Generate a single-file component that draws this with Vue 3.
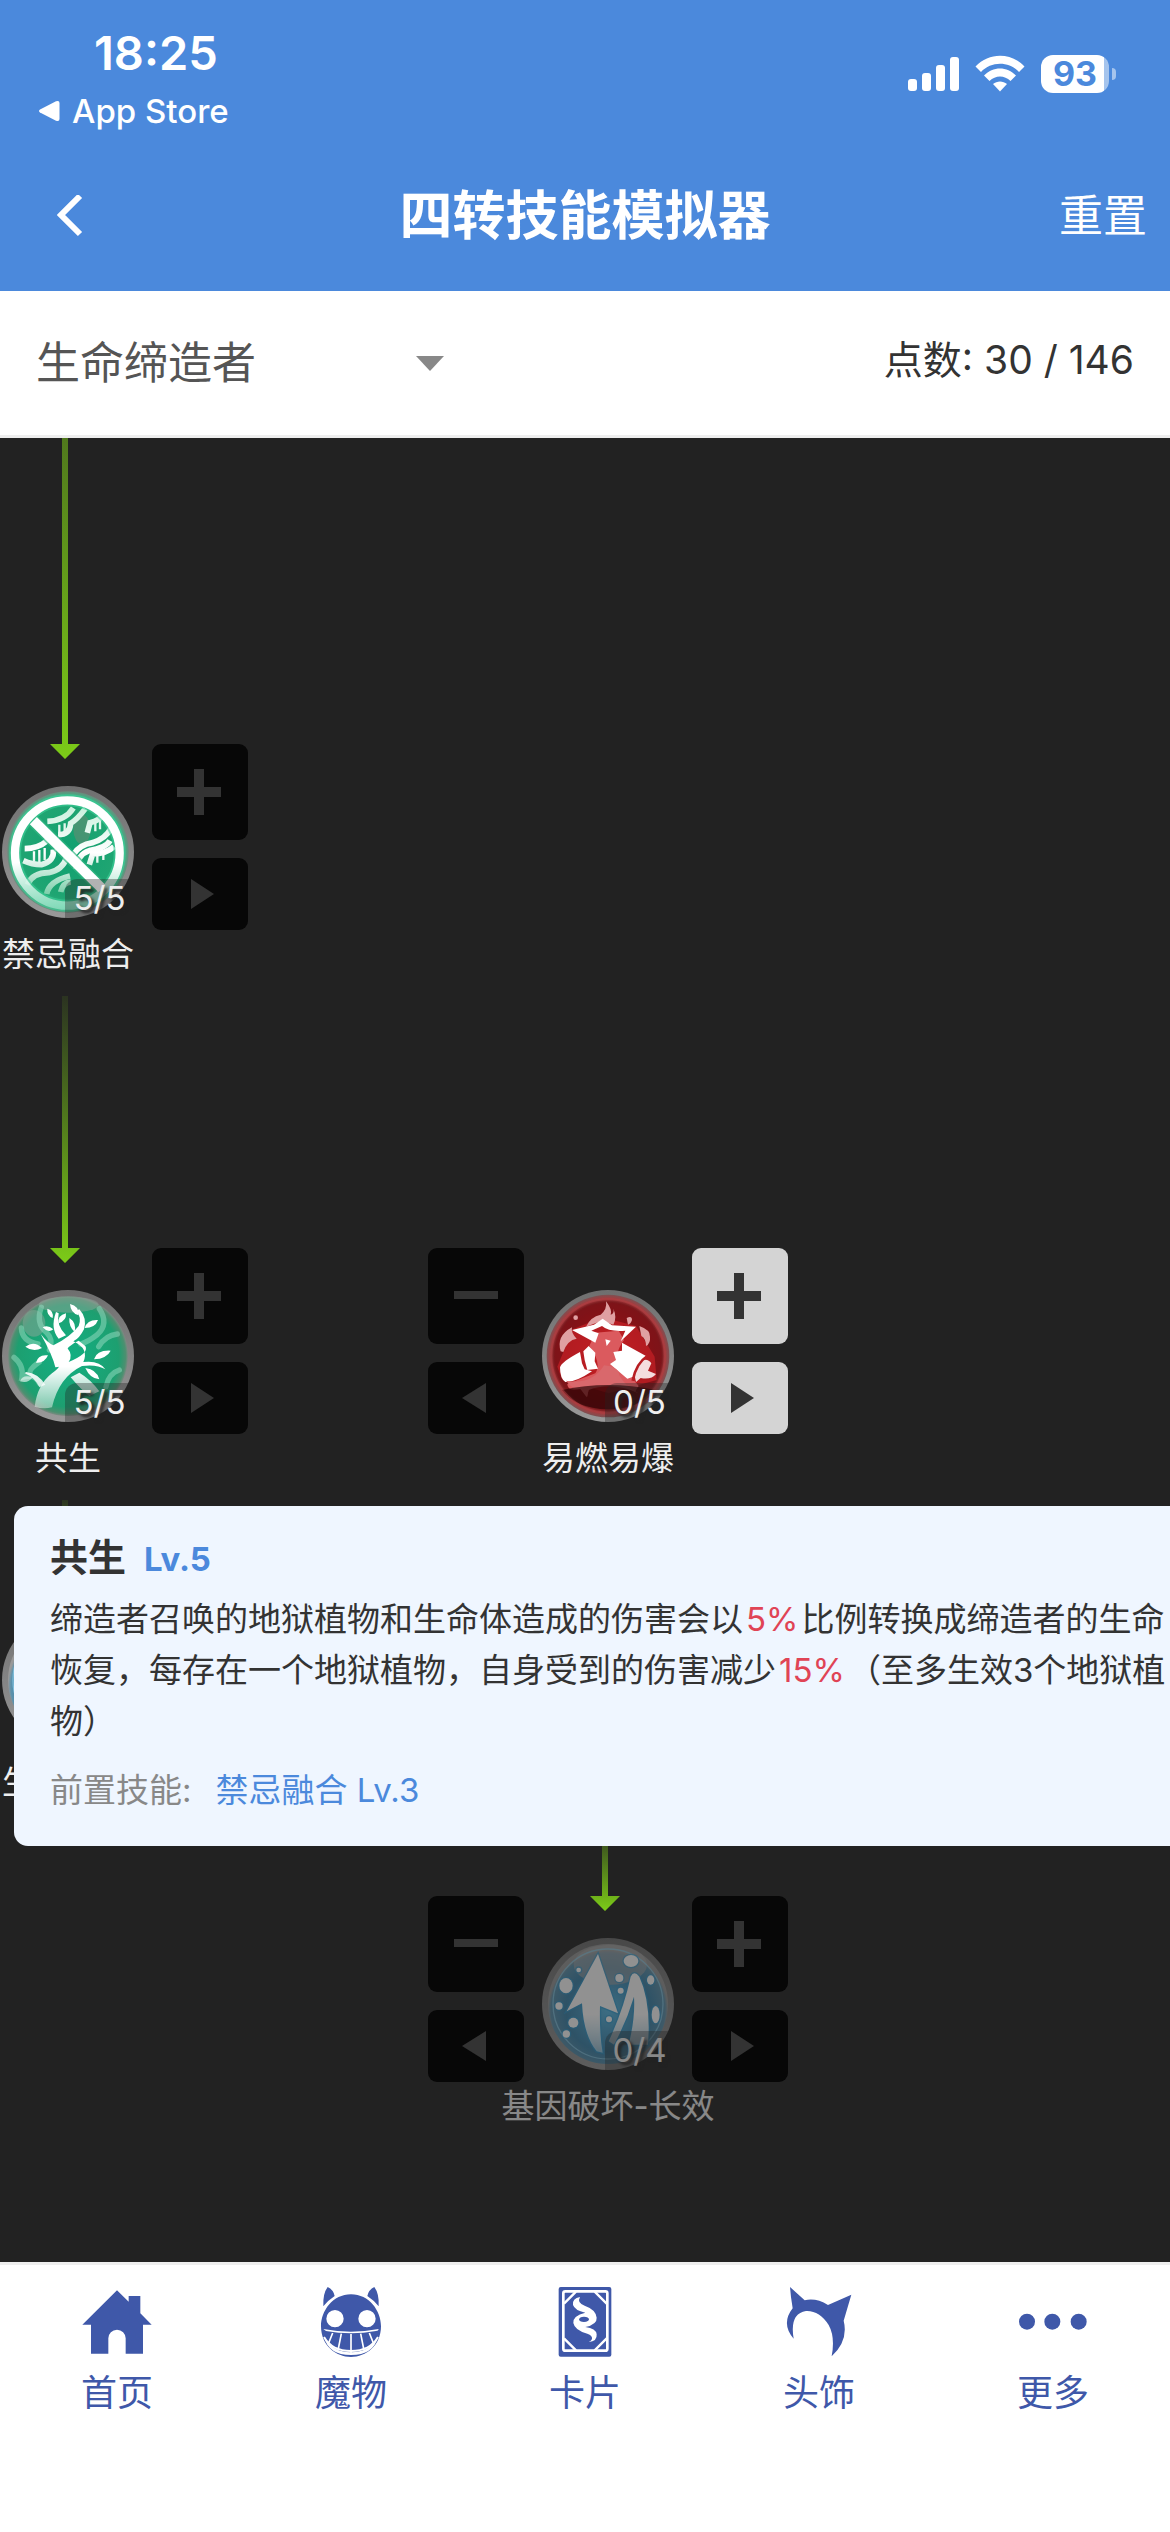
<template>
  <div class="app">
    <header class="header">
      <!-- Device status -->
      <div class="status">
        <div class="status__left">
          <span class="status__time">18:25</span>
          <a class="status__return" href="#">
            <svg width="22" height="22" viewBox="0 0 22 22" fill="#fff">
              <path d="M2 9.5L18 1.3Q21.5 0 21.5 3V19Q21.5 22 18 20.7L2 12.5Q0 11 2 9.5Z"/>
            </svg>
            App Store
          </a>
        </div>
        <div class="status__right">
          <svg width="51" height="38" viewBox="0 0 51 38" fill="#fff">
            <rect x="0" y="24" width="9" height="12" rx="3"/>
            <rect x="14" y="18" width="9" height="18" rx="3"/>
            <rect x="28" y="10" width="9" height="26" rx="3"/>
            <rect x="42" y="2" width="9" height="34" rx="3"/>
          </svg>
          <svg width="50" height="38" viewBox="0 0 50 38" fill="#fff">
            <path d="M0.5 11.5C14-3 36-3 49.500 11.500L44 17C34 6 16 6 6 17Z"/>
            <path d="M9 20.500C18 11 32 11 41 20.500L35.500 26C29.500 20 20.500 20 14.500 26Z"/>
            <path d="M18 29C22 25.500 28 25.500 32 29L25 36.500Z"/>
          </svg>
          <div class="battery">
            <span class="battery__body">93</span>
            <span class="battery__nub"></span>
          </div>
        </div>
      </div>

      <!-- Title bar -->
      <div class="titlebar">
        <button class="titlebar__back" aria-label="返回">
          <svg width="26" height="42" viewBox="0 0 26 42" fill="none" stroke="#fff" stroke-width="6">
            <path d="M23 1L4 20L23 39"/>
          </svg>
        </button>
        <h1 class="titlebar__title">四转技能模拟器</h1>
        <button class="titlebar__reset" @click="reset">重置</button>
      </div>
    </header>

    <div class="toolbar">
      <div class="job">
        <select v-model="job" class="job__select" aria-label="职业">
          <option v-for="name in jobs" :key="name" :value="name">{{ name }}</option>
        </select>
        <svg class="job__caret" width="28" height="15" viewBox="0 0 28 15" fill="#888">
          <path d="M0 0H28L14 15Z"/>
        </svg>
      </div>
      <span class="toolbar__points">点数: {{ used }} / 146</span>
    </div>

    <!-- Skill tree -->
    <main class="tree">
      <div
        v-for="(arrow, i) in arrows"
        :key="'a' + i"
        class="arrow"
        :style="{ left: arrow.x + 'px', top: arrow.y + 'px', height: arrow.length + 'px' }"
      ></div>

      <div
        v-for="skill in skills"
        :key="skill.id"
        class="skill"
        :class="{ 'skill--locked': skill.locked }"
        :style="{ left: skill.x + 'px', top: skill.y + 'px' }"
      >
        <div class="skill__controls">
          <button class="btn" :disabled="!canSub(skill)" aria-label="减一级" @click="skill.level--">
            <svg width="44" height="46" viewBox="0 0 44 46"><path d="M0 18H44V26H0Z"/></svg>
          </button>
          <button class="btn btn--small" :disabled="!canSub(skill)" aria-label="最低" @click="skill.level = 0">
            <svg width="28" height="30" viewBox="0 0 28 30"><path d="M24 0V30L0 15Z"/></svg>
          </button>
        </div>

        <div class="skill__main">
          <div class="skill__icon">
            <svg viewBox="0 0 396 396" width="132" height="132">
              <defs>
                <linearGradient id="rim" x1="0" y1="0" x2="0" y2="1">
                  <stop offset="0" stop-color="#6f6f6f"/><stop offset="1" stop-color="#999"/>
                </linearGradient>
                <radialGradient id="green" cx="0.5" cy="0.5" r="0.5">
                  <stop offset="0" stop-color="#0fa070"/><stop offset="0.75" stop-color="#1fa572"/>
                  <stop offset="0.92" stop-color="#35b886"/><stop offset="1" stop-color="#6a8c7c"/>
                </radialGradient>
                <radialGradient id="leaf" cx="0.5" cy="0.5" r="0.5">
                  <stop offset="0" stop-color="#12b083"/><stop offset="0.85" stop-color="#1d9f70"/>
                  <stop offset="0.96" stop-color="#4c9070"/><stop offset="1" stop-color="#7c8a82"/>
                </radialGradient>
                <radialGradient id="red" cx="0.5" cy="0.5" r="0.5">
                  <stop offset="0" stop-color="#c22"/><stop offset="0.7" stop-color="#8a1419"/>
                  <stop offset="0.88" stop-color="#7c191d"/><stop offset="0.94" stop-color="#a33d40"/>
                  <stop offset="1" stop-color="#7d5052"/>
                </radialGradient>
                <radialGradient id="blue" cx="0.5" cy="0.55" r="0.5">
                  <stop offset="0" stop-color="#58b8e4"/><stop offset="0.7" stop-color="#3a83aa"/>
                  <stop offset="0.95" stop-color="#5b91ac"/><stop offset="1" stop-color="#999"/>
                </radialGradient>
                <linearGradient id="fade" gradientUnits="userSpaceOnUse" x1="0" y1="230" x2="0" y2="370">
                  <stop offset="0" stop-color="#fff"/><stop offset="1" stop-color="#fff" stop-opacity="0.35"/>
                </linearGradient>
                <linearGradient id="strand" gradientUnits="userSpaceOnUse" x1="0" y1="60" x2="0" y2="340">
                  <stop offset="0" stop-color="#c9f0dd"/><stop offset="0.5" stop-color="#fff"/>
                  <stop offset="1" stop-color="#6cc9a0"/>
                </linearGradient>
              </defs>
              <circle cx="198" cy="198" r="198" fill="url(#rim)"/>

              <template v-if="skill.icon === 'fusion'">
                <circle cx="198" cy="198" r="182" fill="url(#green)"/>
                <ellipse cx="240" cy="130" rx="26" ry="44" fill="#5a8f74" opacity="0.7"/>
                <!-- Twisted strands behind the ban sign -->
                <g fill="none" stroke="url(#strand)" stroke-width="17">
                  <path d="M136 106Q190 104 214 66M250 68Q226 100 206 112Q204 146 168 146M68 188Q108 188 136 164M154 190Q158 226 118 236Q90 236 64 224"/>
                  <path d="M76 296Q92 260 140 260Q182 252 194 214M134 324Q142 284 204 270M214 206Q232 176 272 170Q312 156 326 128M324 164Q312 186 262 194Q226 206 222 250"/>
                  <path d="M256 140L264 110Q292 104 308 82M262 236L272 204Q312 204 336 182M176 318Q182 290 206 288"/>
                </g>
                <g fill="none" stroke="url(#strand)" stroke-width="7">
                  <path d="M172 116V142M188 112V138M96 196V226M112 192V230M128 186V222M280 106V136M294 100V130M286 204V230M304 200V222"/>
                </g>
                <ellipse cx="196" cy="201" rx="157" ry="158" fill="none" stroke="#3ccf98" stroke-width="36" opacity="0.6"/>
                <path d="M94 104L300 308" stroke="#33b884" stroke-width="40" opacity="0.7"/>
                <path d="M94 104L300 308" stroke="#fff" stroke-width="30"/>
                <ellipse cx="196" cy="201" rx="157" ry="158" fill="none" stroke="url(#fade)" stroke-width="25"/>
              </template>

              <template v-else-if="skill.icon === 'tree'">
                <circle cx="198" cy="198" r="180" fill="url(#leaf)"/>
                <ellipse cx="96" cy="100" rx="34" ry="40" fill="#8ea69a" opacity="0.5"/>
                <ellipse cx="200" cy="44" rx="90" ry="24" fill="#8ea69a" opacity="0.5"/>
                <g fill="none" stroke="#8fd9bd" stroke-opacity="0.55" stroke-width="16" stroke-linecap="round">
                  <path d="M118 52Q100 100 134 128Q156 150 142 180M58 114Q60 154 108 162M292 56Q322 100 286 134Q258 156 236 162M346 132Q310 136 290 170M36 202Q66 226 60 262Q100 250 112 280M352 240Q320 250 312 290M112 216Q80 238 84 252"/>
                </g>
                <path fill="url(#fade)" d="M98 350Q106 284 150 250Q190 220 180 194L196 174Q214 196 200 216Q262 190 250 168L230 152Q196 166 186 194Q194 230 160 232Q152 196 116 132Q136 158 154 166Q204 142 230 108Q240 80 222 62L232 58Q256 84 246 118Q232 146 214 154Q262 176 244 216Q292 210 310 238Q284 222 240 228Q170 262 150 352Q124 358 98 350Z"/>
                <path fill="url(#fade)" d="M170 146Q144 116 162 66L170 70Q162 106 192 136ZM72 246Q108 250 130 284L112 292Q98 262 68 250ZM206 262L232 248Q266 268 292 304L262 318Q238 300 206 262Z"/>
                <g fill="#fff">
                  <path d="M204 42Q232 48 230 76Q206 70 204 42ZM136 56Q156 62 152 84Q134 76 136 56ZM170 100Q166 76 192 70Q194 92 170 100ZM202 84Q224 98 218 126Q200 110 202 84ZM248 114Q256 88 288 90Q280 114 248 114ZM122 112Q138 104 154 118Q138 130 122 112ZM70 170Q96 150 120 174Q94 188 70 170ZM102 218Q108 192 138 196Q128 220 102 218ZM276 208Q284 180 326 182Q314 206 276 208ZM250 234Q284 238 292 268Q264 266 250 234Z"/>
                  <path d="M54 274Q62 252 92 262Q78 282 54 274Z" opacity="0.6"/>
                </g>
              </template>

              <template v-else-if="skill.icon === 'blast'">
                <circle cx="198" cy="198" r="184" fill="url(#red)"/>
                <circle cx="198" cy="198" r="160" fill="#7d1016" opacity="0.55"/>
                <path d="M92 118L180 82L282 108L338 200L344 270L200 310L60 268L46 230Z" fill="#e2262b" opacity="0.5"/>
                <g fill="#e0a0a2">
                  <path d="M132 110Q146 80 176 74Q196 58 192 34Q212 60 206 74Q218 70 214 56Q226 82 214 104L180 92Z"/>
                  <path d="M56 184Q42 138 90 112Q86 128 104 146Q76 150 64 186Z"/>
                  <path d="M292 108Q326 120 324 140Q326 160 312 168Q312 146 298 138Z"/>
                  <circle cx="101" cy="83" r="7"/><path d="M254 84Q270 76 270 90Q266 102 258 104Z"/>
                </g>
                <path d="M160 128L230 122L246 150Q228 172 222 208Q260 250 290 288L280 304Q200 270 140 298L136 320L116 296Q76 306 76 282L160 250Q180 220 142 168Z" fill="#db5a5e"/>
                <g fill="#fff">
                  <path d="M90 120L156 104L182 86L210 106L282 110L236 154L250 122Q200 126 180 108L148 122L170 130L160 158Z"/>
                  <path d="M54 232Q58 216 114 186L120 220L128 238L150 244Q100 278 70 276Q54 266 54 232Z"/>
                  <path d="M124 184L140 168L160 188L158 214L168 236L136 240L128 210Z"/>
                  <path d="M240 158L312 198Q286 222 274 260L256 266L204 222L222 210L214 186L240 182Z"/>
                  <path d="M190 148L206 152L194 168Z"/>
                  <path d="M290 216Q316 200 328 220L318 242L342 252Q328 270 296 264L282 276Q272 250 290 216Z" opacity="0.85"/>
                </g>
                <path d="M316 198Q282 220 272 272" stroke="#b71d22" stroke-width="8" fill="none"/>
                <path d="M72 272Q150 286 186 226Q230 230 232 256Q250 290 290 310Q210 274 140 300L134 322L116 298Q90 298 72 272Z" fill="#d9686c"/>
                <path d="M60 300Q198 270 340 300Q300 356 198 358Q100 356 60 300Z" fill="#2c0406" opacity="0.7"/>
                <circle cx="198" cy="198" r="170" fill="none" stroke="#b84145" stroke-width="6" opacity="0.5"/>
              </template>

              <template v-else>
                <circle cx="198" cy="198" r="180" fill="url(#blue)"/>
                <ellipse cx="205" cy="80" rx="110" ry="60" fill="#aaa" opacity="0.6"/>
                <circle cx="198" cy="198" r="165" fill="none" stroke="#8fd0ee" stroke-width="4" opacity="0.7"/>
                <g stroke="#2d9bd2" stroke-width="8" stroke-opacity="0.6" paint-order="stroke">
                  <path fill="url(#fade)" d="M168 48L228 226L174 204Q172 290 182 344L164 340Q124 290 120 196L74 220Z"/>
                  <path fill="url(#fade)" d="M200 310Q246 210 266 116Q276 96 292 116Q322 180 320 280L318 320H260Q280 240 276 176Q254 250 216 320Z"/>
                  <g fill="#fff">
                    <ellipse cx="267" cy="69" rx="22" ry="18"/><ellipse cx="72" cy="143" rx="20" ry="23"/>
                    <circle cx="232" cy="120" r="12"/><circle cx="236" cy="158" r="9"/>
                    <ellipse cx="326" cy="126" rx="11" ry="14"/><ellipse cx="341" cy="230" rx="12" ry="26"/>
                    <circle cx="51" cy="204" r="11"/><circle cx="94" cy="254" r="15"/>
                    <circle cx="73" cy="288" r="11"/><circle cx="201" cy="244" r="9"/><circle cx="110" cy="96" r="7"/>
                  </g>
                </g>
              </template>
            </svg>
            <span class="skill__level">{{ skill.level }}/{{ skill.max }}</span>
          </div>
          <span class="skill__name">{{ skill.name }}</span>
        </div>

        <div class="skill__controls">
          <button class="btn" :disabled="!canAdd(skill)" aria-label="加一级" @click="skill.level++">
            <svg width="46" height="46" viewBox="0 0 46 46"><path d="M17 0H27V18H44V28H27V46H17V28H0V18H17Z"/></svg>
          </button>
          <button class="btn btn--small" :disabled="!canAdd(skill)" aria-label="最高" @click="skill.level = skill.max">
            <svg width="28" height="30" viewBox="0 0 28 30"><path d="M5 0L28 15L5 30Z"/></svg>
          </button>
        </div>
      </div>

      <!-- Skill details -->
      <section class="tip">
        <h2 class="tip__head">共生<span class="tip__lv">Lv.5</span></h2>
        <p class="tip__text">缔造者召唤的地狱植物和生命体造成的伤害会以<em>5%</em>比例转换成缔造者的生命恢复，每存在一个地狱植物，自身受到的伤害减少<em>15%</em>（至多生效3个地狱植物）</p>
        <p class="tip__need">前置技能:<a href="#">禁忌融合 Lv.3</a></p>
      </section>
    </main>

    <nav class="nav">
      <a class="nav__item" href="#">
        <svg width="70" height="70" viewBox="0 0 210 210" fill="currentColor">
          <path d="M105 10L140 44V27H175V79L209 113H183V200H131V154A26 26 0 0 0 79 154V200H27V113H1Z"/>
        </svg>
        首页
      </a>
      <a class="nav__item" href="#">
        <svg width="70" height="70" viewBox="0 0 210 210" fill="currentColor">
          <path d="M35 0Q52 8 56 27Q36 40 22 58Q20 20 35 0ZM175 0Q158 8 154 27Q174 40 188 58Q190 20 175 0Z"/>
          <path fill-rule="evenodd" d="M105 22C160 22 195 72 195 118C195 176 150 210 105 210C60 210 15 176 15 118C15 72 50 22 105 22ZM57 69A26 26 0 1 0 57 121A26 26 0 1 0 57 69ZM153 69A26 26 0 1 0 153 121A26 26 0 1 0 153 69Z"/>
          <path fill="#fff" d="M22 126Q105 142 188 126Q188 132 180 132Q105 146 30 132ZM24 150Q50 196 105 196Q160 196 186 150Q172 204 105 204Q38 204 24 150Z"/>
          <g fill="none" stroke="#fff">
            <path stroke-width="5" d="M50 138L38 168M76 140L66 190M105 141V200M134 140L144 190M160 138L172 168"/>
            <path stroke-width="6" d="M24 150Q48 192 105 192Q162 192 186 150"/>
          </g>
        </svg>
        魔物
      </a>
      <a class="nav__item" href="#">
        <svg width="70" height="70" viewBox="0 0 210 210" fill="currentColor">
          <rect x="26" y="0" width="158" height="209" rx="6"/>
          <rect x="40" y="13" width="132" height="178" rx="6" fill="none" stroke="#fff" stroke-width="8"/>
          <path fill="none" stroke="#fff" stroke-width="7" d="M42 50L78 14M134 14L170 50M42 154L78 190M170 154L134 190"/>
          <path fill="#fff" fill-rule="evenodd" d="M90 30Q66 34 69 54Q74 70 106 77Q68 86 70 108Q74 130 112 140Q128 146 126 156Q124 162 116 165Q142 164 140 142Q138 124 106 120Q142 112 140 92Q138 68 104 56Q80 48 90 30ZM102 89Q88 90 87 97Q88 105 102 105Q117 104 117 97Q116 89 102 89Z"/>
        </svg>
        卡片
      </a>
      <a class="nav__item" href="#">
        <svg width="70" height="70" viewBox="0 0 210 210" fill="currentColor">
          <path d="M18 0L62 40Q96 32 132 54L202 23L179 101Q194 160 143 208Q154 150 134 114Q106 70 66 72Q16 80 29 155Q-10 110 26 64Q20 28 18 0Z"/>
        </svg>
        头饰
      </a>
      <a class="nav__item" href="#">
        <svg width="70" height="70" viewBox="0 0 210 210" fill="currentColor">
          <circle cx="27" cy="104" r="24"/><circle cx="103" cy="104" r="24"/><circle cx="182" cy="104" r="24"/>
        </svg>
        更多
      </a>
    </nav>
  </div>
</template>

<script setup>
import { ref } from 'vue'

const jobs = ['生命缔造者']
const job = ref('生命缔造者')
const used = ref(30)

// x/y are the top-left corner of a node on the tree canvas
const skills = ref([
  { id: 1, name: '禁忌融合', icon: 'fusion', level: 5, max: 5, x: -112, y: 306 },
  { id: 2, name: '共生', icon: 'tree', level: 5, max: 5, x: -112, y: 810 },
  { id: 3, name: '易燃易爆', icon: 'blast', level: 0, max: 5, x: 428, y: 810 },
  { id: 4, name: '生命强化', icon: 'gene', level: 0, max: 5, x: -112, y: 1134 },
  { id: 5, name: '基因破坏-长效', icon: 'gene', level: 0, max: 4, x: 428, y: 1458, locked: true }
])

const arrows = [
  { x: 50, y: -270, length: 591 },
  { x: 50, y: 558, length: 267 },
  { x: 50, y: 1062, length: 87 },
  { x: 590, y: 1386, length: 87 }
]

const canAdd = (s) => !s.locked && s.level < s.max
const canSub = (s) => !s.locked && s.level > 0 && s.level < s.max

function reset() {
  skills.value.forEach((s) => { s.level = 0 })
  used.value = 0
}
</script>

<style>
body {
  background: #fff;
}
</style>

<style scoped>
.app {
  display: flex;
  flex-direction: column;
  min-height: 100vh;
  overflow: hidden;
  font-family: Inter, 'Noto Sans CJK SC', sans-serif;
  font-size: 33px;
  color: #333;
}
button {
  border: none;
  padding: 0;
  background: none;
  font: inherit;
  color: inherit;
  cursor: pointer;
}
a {
  color: inherit;
  text-decoration: none;
}
svg {
  display: block;
  flex-shrink: 0;
}

.header {
  background: #4b89dc;
  color: #fff;
}
.status {
  display: flex;
  justify-content: space-between;
  height: 141px;
  padding: 0 54px 0 38px;
  box-sizing: border-box;
}
.status__left {
  display: flex;
  flex-direction: column;
  gap: 10px;
  padding-top: 25px;
}
.status__time {
  padding-left: 56px;
  font-size: 47px;
  font-weight: 600;
  line-height: 56px;
}
.status__return {
  display: flex;
  align-items: center;
  gap: 12px;
  font-weight: 500;
  line-height: 40px;
}
.status__right {
  display: flex;
  gap: 16px;
  padding-top: 55px;
}
.battery {
  display: flex;
  align-items: center;
  gap: 3px;
  height: 38px;
}
.battery__body {
  width: 68px;
  border-radius: 12px;
  background: linear-gradient(90deg, #fff 63px, #a5c4ed 63px);
  color: #4b89dc;
  font-size: 34px;
  font-weight: 700;
  line-height: 38px;
  text-align: center;
}
.battery__nub {
  width: 4px;
  height: 12px;
  border-radius: 0 4px 4px 0;
  background: #a5c4ed;
}

.titlebar {
  display: grid;
  grid-template-columns: 1fr auto 1fr;
  align-items: center;
  height: 150px;
  padding: 0 23px 0 57px;
}
.titlebar__back {
  justify-self: start;
}
.titlebar__title {
  margin: 0 0 0 -34px;
  font-size: 53px;
  font-weight: 700;
  line-height: 72px;
}
.titlebar__reset {
  justify-self: end;
  font-size: 44px;
  line-height: 60px;
}

.toolbar {
  display: flex;
  align-items: center;
  justify-content: space-between;
  height: 144px;
  padding: 0 36px;
  border-bottom: 3px solid #eee;
}
.job {
  display: flex;
  align-items: center;
}
.job__select {
  width: 408px;
  border: none;
  padding: 0;
  margin-right: -28px;
  background: none;
  appearance: none;
  font: inherit;
  font-size: 44px;
  line-height: 60px;
  color: #555;
}
.job__caret {
  pointer-events: none;
}
.toolbar__points {
  padding-bottom: 6px;
  font-size: 39px;
  line-height: 54px;
}

.tree {
  position: relative;
  flex: 1;
  overflow: hidden;
  background: #222;
}
.arrow {
  position: absolute;
  width: 30px;
  background: linear-gradient(rgba(124, 203, 24, 0.1), #7ccb18);
  clip-path: polygon(12px 0, 18px 0, 18px calc(100% - 15px), 100% calc(100% - 15px), 50% 100%, 0 calc(100% - 15px), 12px calc(100% - 15px));
}

.skill {
  position: absolute;
  display: flex;
  gap: 18px;
}
.skill__controls {
  display: flex;
  flex-direction: column;
  gap: 18px;
}
.skill__main {
  display: flex;
  flex-direction: column;
  align-items: center;
  gap: 12px;
  width: 132px;
  padding-top: 42px;
}
.skill--locked .skill__main {
  opacity: 0.5;
}
.skill__icon {
  position: relative;
}
.skill__level {
  position: absolute;
  right: 0;
  bottom: 0;
  width: 69px;
  border-top-left-radius: 12px;
  background: rgba(34, 34, 34, 0.35);
  color: #eee;
  line-height: 39px;
  text-align: center;
  text-shadow: 3px 3px 3px #222;
}
.skill__name {
  color: #eee;
  line-height: 48px;
  white-space: nowrap;
}
.btn {
  display: flex;
  align-items: center;
  justify-content: center;
  width: 96px;
  height: 96px;
  border-radius: 9px;
  background: #d4d4d4;
  fill: #333;
}
.btn--small {
  height: 72px;
}
.btn:disabled {
  background: #070707;
}

.tip {
  position: absolute;
  top: 1068px;
  left: 14px;
  width: 1200px;
  padding: 26px 36px 30px;
  box-sizing: border-box;
  border-radius: 14px;
  background: #eff6ff;
}
.tip__head {
  margin: 0 0 10px;
  font-size: 38px;
  font-weight: 700;
  line-height: 50px;
}
.tip__lv {
  margin-left: 18px;
  font-size: 33px;
  color: #4b89dc;
}
.tip__text {
  margin: 0 0 18px;
  line-height: 51px;
}
.tip__text em {
  margin: 0 3px;
  font-style: normal;
  color: #e04455;
}
.tip__need {
  margin: 0;
  line-height: 51px;
  color: #888;
}
.tip__need a {
  margin-left: 24px;
  color: #4b89dc;
}

.nav {
  display: flex;
  padding: 22px 0 115px;
  border-top: 3px solid #eee;
  background: #fff;
}
.nav__item {
  display: flex;
  flex: 1;
  flex-direction: column;
  align-items: center;
  gap: 12px;
  font-size: 36px;
  line-height: 48px;
  color: #3f58a9;
}
</style>
